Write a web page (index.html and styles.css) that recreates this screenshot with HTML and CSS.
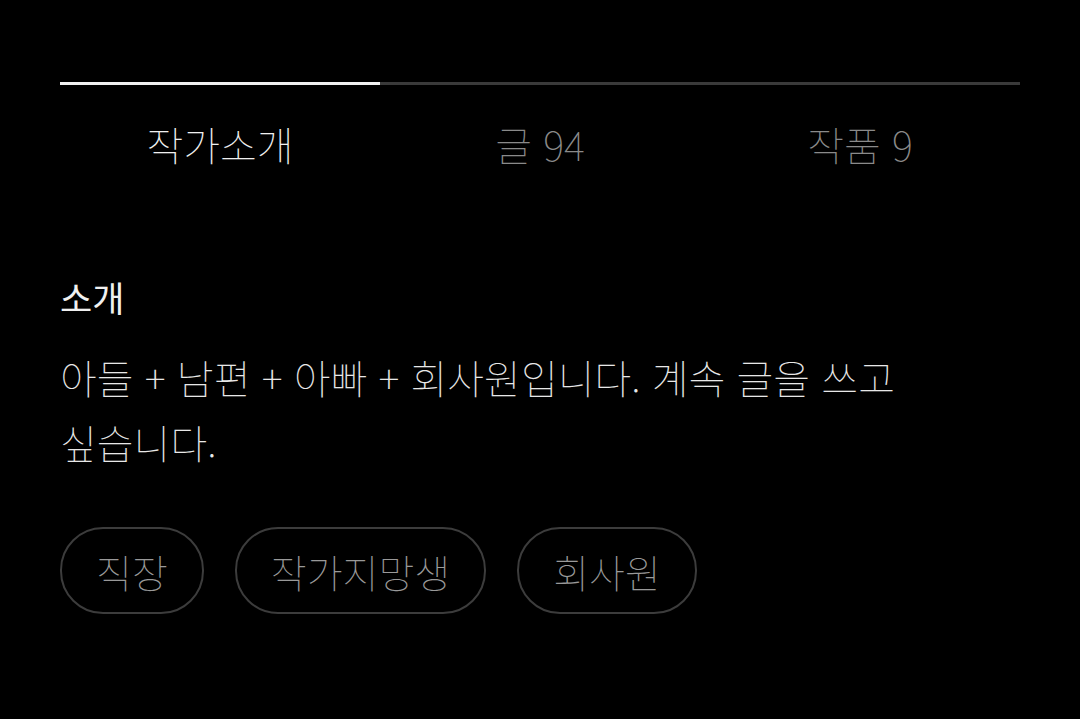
FILE: index.html
```html
<!DOCTYPE html>
<html lang="ko">
<head>
  <meta charset="UTF-8">
  <meta name="viewport" content="width=device-width, initial-scale=1.0">
  <title>작가소개</title>
  <link rel="stylesheet" href="styles.css">
</head>
<body>
  <div class="profile">
    <nav class="tabs">
      <a class="tab active">작가소개</a>
      <a class="tab">글 94</a>
      <a class="tab">작품 9</a>
    </nav>

    <section class="intro">
      <h3>소개</h3>
      <p>아들 + 남편 + 아빠 + 회사원입니다. 계속 글을 쓰고 싶습니다.</p>
      <div class="tags">
        <span class="tag">직장</span>
        <span class="tag">작가지망생</span>
        <span class="tag">회사원</span>
      </div>
    </section>
  </div>
</body>
</html>
```

FILE: styles.css
```css
body {
  margin: 0;
  background: #000;
  font-family: "Noto Sans CJK KR", "Noto Sans", sans-serif;
  font-weight: 100;
  color: #e8e8e8;
}

.profile {
  padding: 82px 60px 0;
}

.tabs {
  display: flex;
}

.tab {
  flex: 1;
  text-align: center;
  border-top: 3px solid #3a3a3a;
  padding-top: 32px;
  font-size: 40px;
  line-height: 54px;
  color: #8a8a8a;
}

.tab.active {
  border-top-color: #f0f0f0;
  color: #f0f0f0;
}

.intro {
  padding-top: 106px;
}

.intro h3 {
  margin: 0;
  font-size: 35px;
  font-weight: 400;
  line-height: 40px;
  color: #f0f0f0;
}

.intro p {
  margin: 28px 0 0;
  font-size: 40px;
  line-height: 65px;
  word-break: keep-all;
  color: #e8e8e8;
}

.tags {
  display: flex;
  gap: 31px;
  margin-top: 52px;
}

.tag {
  box-sizing: border-box;
  border: 2px solid #3c3c3c;
  border-radius: 43px;
  padding: 0 34px;
  height: 87px;
  display: flex;
  align-items: center;
  font-size: 39px;
  color: #999;
}
```
